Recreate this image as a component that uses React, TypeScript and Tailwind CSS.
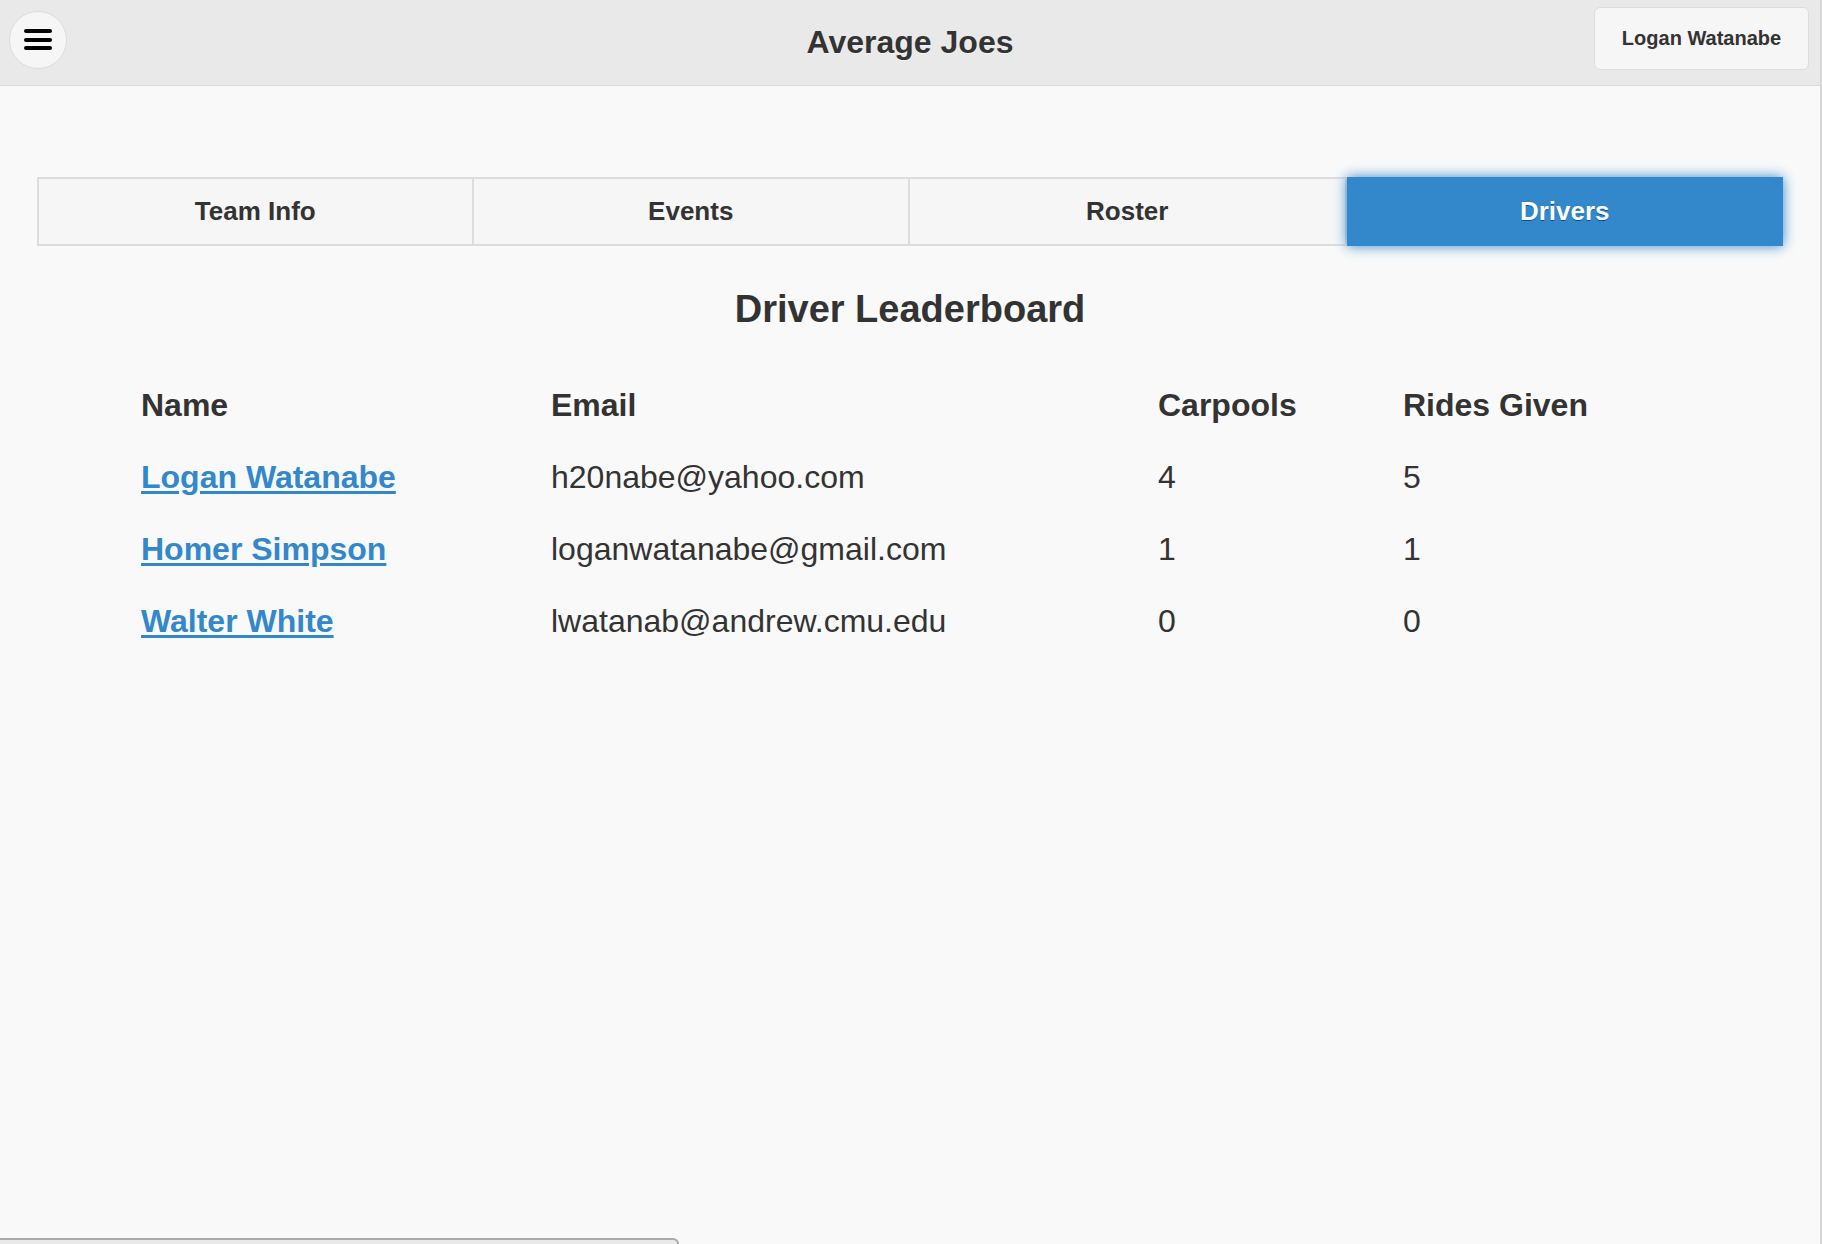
import React from 'react';

interface Driver {
  name: string;
  email: string;
  carpools: number;
  rides: number;
}

const drivers: Driver[] = [
  { name: 'Logan Watanabe', email: 'h20nabe@yahoo.com', carpools: 4, rides: 5 },
  { name: 'Homer Simpson', email: 'loganwatanabe@gmail.com', carpools: 1, rides: 1 },
  { name: 'Walter White', email: 'lwatanab@andrew.cmu.edu', carpools: 0, rides: 0 },
];

const tabs = ['Team Info', 'Events', 'Roster', 'Drivers'];

const App: React.FC = () => {
  const active = 'Drivers';

  return (
    <div
      className="h-screen w-full flex flex-col bg-[#f9f9f9] text-[#333] border-r-2 border-[#d6d6d6] overflow-hidden"
      style={{ fontFamily: '"Liberation Sans", Arial, Helvetica, sans-serif' }}
    >
      {/* top bar */}
      <div className="h-[86px] shrink-0 bg-[#e9e9e9] border-b border-[#dadada] flex items-center justify-between px-[9px] relative">
        <button className="w-[58px] h-[58px] rounded-full bg-[#f6f6f6] border border-[#dddddd] flex flex-col items-center justify-center gap-[4.5px] mt-[-6px]">
          <span className="block w-[28px] h-[4px] rounded-full bg-black" />
          <span className="block w-[28px] h-[4px] rounded-full bg-black" />
          <span className="block w-[28px] h-[4px] rounded-full bg-black" />
        </button>
        <h1 className="absolute left-0 right-0 text-center text-[32px] font-bold leading-none pointer-events-none mt-[-2px] [text-shadow:0_1px_0_#f3f3f3]">
          Average Joes
        </h1>
        <button className="w-[215px] h-[63px] mr-[2px] mt-[-9px] rounded-[6px] bg-[#f6f6f6] border border-[#dddddd] text-[20px] font-bold [text-shadow:0_1px_0_#f3f3f3]">
          Logan Watanabe
        </button>
      </div>

      <div className="flex-1 pl-[37px] pr-[37px]">
        {/* navbar */}
        <div className="mt-[91px] grid grid-cols-4 h-[69px]">
          {tabs.map((t, i) =>
            t === active ? (
              <div
                key={t}
                className="flex items-center justify-center bg-[#3388cc] text-white text-[26px] font-bold shadow-[0_0_12px_#3388cc] [text-shadow:0_1px_0_#005599] relative z-10"
              >
                {t}
              </div>
            ) : (
              <div
                key={t}
                className={`flex items-center justify-center bg-[#f6f6f6] border-y-2 border-[#dddddd] text-[26px] font-bold [text-shadow:0_1px_0_#f3f3f3] ${
                  i === 0 ? 'border-l-2 border-r-2' : 'border-r-2'
                }`}
              >
                {t}
              </div>
            )
          )}
        </div>

        <h2 className="mt-[41px] text-center text-[38px] font-bold leading-[44px]">Driver Leaderboard</h2>

        {/* leaderboard */}
        <div className="mt-[38px] ml-[104px] grid grid-cols-[410px_607px_245px_1fr] text-[32px] leading-[72px]">
          <div className="font-bold">Name</div>
          <div className="font-bold">Email</div>
          <div className="font-bold">Carpools</div>
          <div className="font-bold">Rides Given</div>
          {drivers.map((d) => (
            <React.Fragment key={d.email}>
              <div>
                <a href="#" className="font-bold text-[#3388cc] underline underline-offset-[3px]">
                  {d.name}
                </a>
              </div>
              <div>{d.email}</div>
              <div>{d.carpools}</div>
              <div>{d.rides}</div>
            </React.Fragment>
          ))}
        </div>
      </div>

      {/* bottom edge of a panel peeking in */}
      <div className="h-[6px] w-[679px] shrink-0 bg-[#e9e9e9] border-t-2 border-r-2 border-[#aaaaaa] rounded-tr-[6px]" />
    </div>
  );
};

export default App;
